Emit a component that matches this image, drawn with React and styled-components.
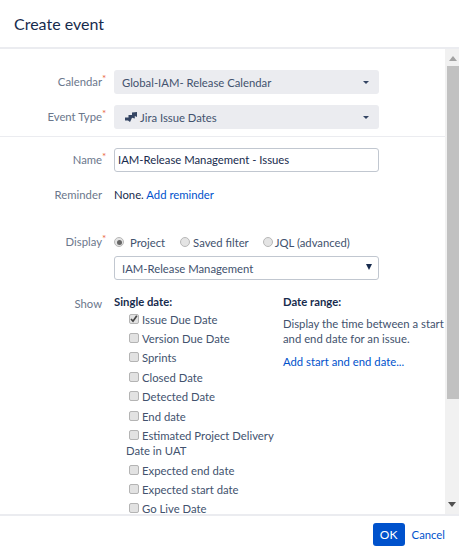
import React from "react";
import styled, { createGlobalStyle } from "styled-components";

const Global = createGlobalStyle`
  html, body { margin: 0; padding: 0; background: #fff; }
  body { font-family: "Lato", "Noto Sans", sans-serif; font-size: 11.3px; color: #172b4d; }
  * { box-sizing: border-box; }
`;
const Dialog = styled.div`
  width: 459px; height: 553px; display: flex; flex-direction: column; overflow: hidden; background: #fff;
`;
const Header = styled.header`
  height: 49px; flex: none; border-bottom: 2px solid #ebecf0; padding: 13px 14px 0;
`;
const Title = styled.h2`
  margin: 0; font-size: 16px; line-height: 22px; font-weight: 400; color: #172b4d;
`;
const Middle = styled.div`
  flex: 1; min-height: 0; display: flex;
`;
const Scroll = styled.div`
  flex: 1; min-width: 0; overflow: hidden; padding-top: 21px;
`;
const Row = styled.div`
  display: grid; grid-template-columns: 102px 1fr; column-gap: 12px; align-items: ${p => p.$align || "center"};
  min-height: ${p => p.$h || 24}px; margin-bottom: ${p => p.$mb || 0}px; margin-top: ${p => p.$mt || 0}px;
`;
const Label = styled.label`
  text-align: right; color: #6b778c; line-height: 16px; position: relative; margin-top: ${p => p.$mt || 0}px;
`;
const Star = styled.span`
  position: absolute; left: 100%; top: -2px; color: #e9663f; font-size: 10px; line-height: 12px;
`;
const SelectBox = styled.div`
  width: 265px; height: 24px; background: #ebecf0; border-radius: 3px; display: flex; align-items: center;
  padding: 0 10px 0 ${p => p.$pl || 8}px; color: #42526e;
`;
const Grow = styled.span`
  flex: 1; display: flex; align-items: center; gap: 2px;
`;
const Caret = styled.span`
  width: 0; height: 0; border-left: 3.5px solid transparent; border-right: 3.5px solid transparent; border-top: 3.5px solid #344563;
`;
const Divider = styled.hr`
  margin: 7px 0 11px; border: 0; border-top: 1px solid #ebecf0; height: 0;
`;
const Input = styled.div`
  width: 265px; height: 24px; border: 1px solid #c1c7d0; border-radius: 3px; padding: 0 3px; line-height: 22px; color: #172b4d;
`;
const Plain = styled.div`
  line-height: 16px; color: #172b4d;
`;
const Link = styled.a`
  color: #0052cc; text-decoration: none;
`;
const Radios = styled.div`
  display: flex; align-items: center;
`;
const RadioItem = styled.span`
  display: inline-flex; align-items: center; color: #42526e; margin-right: ${p => p.$mr}px; gap: ${p => p.$gap}px;
`;
const Radio = styled.span`
  width: 10px; height: 10px; border-radius: 50%; border: 1px solid #b8b8b8; background: #e4e4e4; display: inline-block; position: relative;
  ${p => p.$on && `&::after { content: ""; position: absolute; inset: 1.5px; border-radius: 50%; background: #666; }`}
`;
const NativeSelect = styled.div`
  width: 265px; height: 24px; margin-left: 114px; border: 1px solid #c1c7d0; border-radius: 3px; display: flex; align-items: center;
  padding: 0 6px 0 7px; color: #42526e; margin-top: 6px; margin-bottom: 14px;
`;
const BlackCaret = styled.span`
  width: 0; height: 0; border-left: 3.5px solid transparent; border-right: 3.5px solid transparent; border-top: 6px solid #172b4d; margin-top: -3px;
`;
const Columns = styled.div`
  display: grid; grid-template-columns: 169px 162px;
`;
const Heading = styled.div`
  font-weight: 700; line-height: 16px; color: #172b4d;
`;
const CheckList = styled.div`
  margin-top: -0.5px; padding-left: 12px;
`;
const CheckItem = styled.div`
  line-height: 15px; color: #42526e; margin-bottom: 2.45px; width: 150px; text-indent: 3px; padding-top: 2px;
`;
const Box = styled.span`
  display: inline-block; width: 10px; height: 10px; border: 1px solid #b4b4b4; border-radius: 2px; background: #e2e2e2; margin-right: 3px; vertical-align: 0; position: relative;
  svg { position: absolute; left: 0; top: 0; }
`;
const Para = styled.p`
  margin: 6px 0 9px; line-height: 15px; color: #42526e;
`;
const ScrollBar = styled.div`
  width: 14px; flex: none; background: #f1f1f1; display: flex; flex-direction: column; align-items: flex-end; position: relative;
`;
const ArrowUp = styled.span`
  width: 0; height: 0; align-self: center; margin: 7px 0 5px 2px; border-left: 4px solid transparent; border-right: 4px solid transparent; border-bottom: 5px solid #a3a3a3;
`;
const Thumb = styled.div`
  width: 12px; height: 333px; background: #c1c1c1;
`;
const ArrowDown = styled.span`
  width: 0; height: 0; position: absolute; bottom: 7px; left: 3px; border-left: 4px solid transparent; border-right: 4px solid transparent; border-top: 5px solid #505050;
`;
const Footer = styled.footer`
  height: 39px; flex: none; border-top: 2px solid #ebecf0; display: flex; align-items: center; justify-content: flex-end; padding: 0 14px 0 0; gap: 7px;
`;
const Ok = styled.button`
  width: 32px; height: 23px; background: #0052cc; border: 0; border-radius: 3px; color: #fff; font: 400 12px "Lato", sans-serif; padding: 0;
`;

const JiraIcon = () => (
  <svg width="14" height="12" viewBox="0 0 14 12" fill="#344563">
    <path d="M1 6.5 L4.5 6.5 L4.5 4 L8 4 L8 1.5 L13 1 L13 6 L10.8 5 L10.8 7.5 L8 6.8 L7 9 L6 11 L4 9.5 L1 9.5 Z" />
  </svg>
);
const Tick = () => (
  <svg width="8" height="8" viewBox="0 0 8 8"><path d="M1 4 L3 6.2 L6.8 0.8" fill="none" stroke="#444" strokeWidth="1.7" /></svg>
);
const items = ["Version Due Date", "Sprints", "Closed Date", "Detected Date", "End date", "Estimated Project Delivery Date in UAT", "Expected end date", "Expected start date", "Go Live Date"];

export default function App() {
  return (
    <>
      <Global />
      <Dialog>
        <Header><Title>Create event</Title></Header>
        <Middle>
          <Scroll>
            <Row $mb={11}>
              <Label>Calendar<Star>*</Star></Label>
              <SelectBox><Grow>Global-IAM- Release Calendar</Grow><Caret /></SelectBox>
            </Row>
            <Row>
              <Label>Event Type<Star>*</Star></Label>
              <SelectBox $pl={10}><Grow><JiraIcon />Jira Issue Dates</Grow><Caret /></SelectBox>
            </Row>
            <Divider />
            <Row $mb={11}>
              <Label>Name<Star>*</Star></Label>
              <Input>IAM-Release Management - Issues</Input>
            </Row>
            <Row $h={24} $mb={27}>
              <Label>Reminder</Label>
              <Plain>None. <Link>Add reminder</Link></Plain>
            </Row>
            <Row $h={16}>
              <Label>Display<Star>*</Star></Label>
              <Radios>
                <RadioItem $mr={15} $gap={6}><Radio $on />Project</RadioItem>
                <RadioItem $mr={14} $gap={3}><Radio />Saved filter</RadioItem>
                <RadioItem $mr={0} $gap={2}><Radio />JQL (advanced)</RadioItem>
              </Radios>
            </Row>
            <NativeSelect><Grow>IAM-Release Management</Grow><BlackCaret /></NativeSelect>
            <Row $align="start" $mt={1}>
              <Label $mt={2}>Show</Label>
              <Columns>
                <div>
                  <Heading>Single date:</Heading>
                  <CheckList>
                    <CheckItem><Box><Tick /></Box>Issue Due Date</CheckItem>
                    {items.map(t => <CheckItem key={t}><Box />{t}</CheckItem>)}
                  </CheckList>
                </div>
                <div>
                  <Heading>Date range:</Heading>
                  <Para>Display the time between a start and end date for an issue.</Para>
                  <Link>Add start and end date...</Link>
                </div>
              </Columns>
            </Row>
          </Scroll>
          <ScrollBar><ArrowUp /><Thumb /><ArrowDown /></ScrollBar>
        </Middle>
        <Footer><Ok>OK</Ok><Link>Cancel</Link></Footer>
      </Dialog>
    </>
  );
}
